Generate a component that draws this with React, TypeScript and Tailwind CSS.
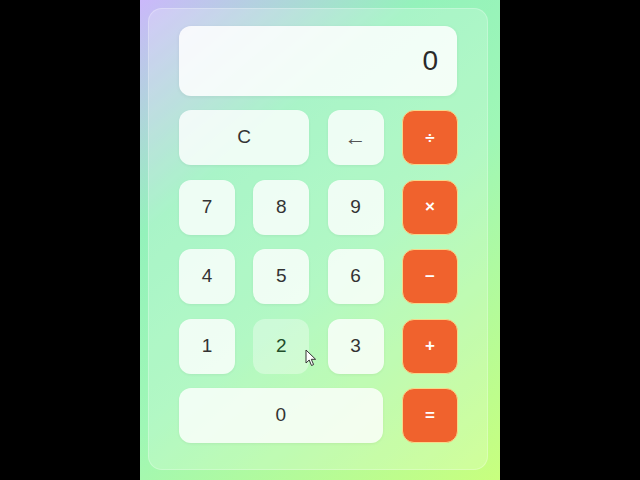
import React from "react";

const light =
  "flex items-center justify-center rounded-[12px] bg-white/80 text-[19px] text-[#333] shadow-[0_1px_3px_rgba(0,0,0,0.06)]";
const op =
  "flex items-center justify-center rounded-[12px] border border-[#f7d88a] bg-[#f0622d] text-[17px] font-bold text-white";

export default function App() {
  return (
    <div className="flex h-[480px] w-[640px] justify-center bg-black" style={{ fontFamily: "'Liberation Sans', Arial, sans-serif" }}>
      <div className="h-[480px] w-[360px] bg-[linear-gradient(140deg,#cbb8fb_0%,#94f2bb_30%,#9ff7b6_55%,#c8ff7e_100%)] p-[8px] pt-[8px]">
        <div className="relative h-[462px] w-[340px] rounded-[14px] border border-white/25 bg-white/20 px-[30px] pt-[17px]">
          <div className="flex h-[70px] w-[278px] items-center justify-end rounded-[12px] bg-white/85 pr-[19px] text-[28px] text-[#2a2a2a] shadow-[0_1px_4px_rgba(0,0,0,0.06)]">
            0
          </div>
          <div className="mt-[14px] grid grid-cols-[repeat(4,56px)] grid-rows-[repeat(5,55px)] gap-x-[18.3px] gap-y-[14.5px]">
            <div className={`${light} col-span-2`}>C</div>
            <div className={light}>
              <span className="text-[22px] text-[#555]">←</span>
            </div>
            <div className={op}>÷</div>
            <div className={light}>7</div>
            <div className={light}>8</div>
            <div className={light}>9</div>
            <div className={op}>×</div>
            <div className={light}>4</div>
            <div className={light}>5</div>
            <div className={light}>6</div>
            <div className={op}>−</div>
            <div className={light}>1</div>
            <div className="flex items-center justify-center rounded-[12px] bg-white/35 text-[19px] text-[#1f4d2a]">2</div>
            <div className={light}>3</div>
            <div className={op}>+</div>
            <div className={`${light} col-span-3 mr-[1px]`}>0</div>
            <div className={op}>=</div>
          </div>
          <svg className="absolute left-[156px] top-[340px]" width="12" height="18" viewBox="0 0 12 18">
            <path d="M1 1 L1 14 L4.2 11 L6.5 16.5 L8.6 15.6 L6.3 10.3 L10.6 10.3 Z" fill="white" stroke="#333" strokeWidth="1" strokeLinejoin="round" />
          </svg>
        </div>
      </div>
    </div>
  );
}
